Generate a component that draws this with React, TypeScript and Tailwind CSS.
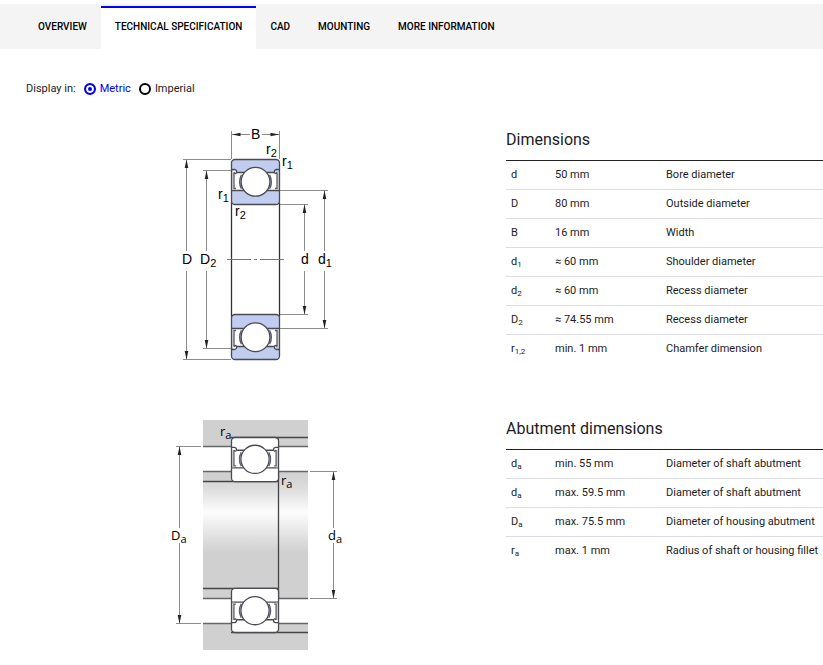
import React, { useState } from 'react';

interface Dimension {
  symbol: string;
  sub?: string;
  value: string;
  label: string;
}

const TABS = ['Overview', 'Technical specification', 'CAD', 'Mounting', 'More information'];

const UNITS = ['Metric', 'Imperial'];

const DIMENSIONS: Dimension[] = [
  { symbol: 'd', value: '50 mm', label: 'Bore diameter' },
  { symbol: 'D', value: '80 mm', label: 'Outside diameter' },
  { symbol: 'B', value: '16 mm', label: 'Width' },
  { symbol: 'd', sub: '1', value: '≈ 60 mm', label: 'Shoulder diameter' },
  { symbol: 'd', sub: '2', value: '≈ 60 mm', label: 'Recess diameter' },
  { symbol: 'D', sub: '2', value: '≈ 74.55 mm', label: 'Recess diameter' },
  { symbol: 'r', sub: '1,2', value: 'min. 1 mm', label: 'Chamfer dimension' },
];

const ABUTMENTS: Dimension[] = [
  { symbol: 'd', sub: 'a', value: 'min. 55 mm', label: 'Diameter of shaft abutment' },
  { symbol: 'd', sub: 'a', value: 'max. 59.5 mm', label: 'Diameter of shaft abutment' },
  { symbol: 'D', sub: 'a', value: 'max. 75.5 mm', label: 'Diameter of housing abutment' },
  { symbol: 'r', sub: 'a', value: 'max. 1 mm', label: 'Radius of shaft or housing fillet' },
];

// One half of the bearing cross section, 48 x 45 units
const BearingSection: React.FC<{ fill: string; transform: string }> = ({ fill, transform }) => (
  <g transform={transform} stroke="#4a4a50" strokeWidth="1.3" fill="none">
    <rect width="48" height="45" rx="3.5" fill="#fff" stroke="none" />
    <path
      d="M0 13V3.5Q0 0 3.5 0H44.5Q48 0 48 3.5V13H45Q43 10 43 13H5Q5 10 3 10Z"
      fill={fill}
      stroke="none"
    />
    <path d="M0 31H48V41.5Q48 45 44.5 45H3.5Q0 45 0 41.5Z" fill={fill} stroke="none" />
    <path d="M5 13H13M35 13H43M0 31H13M35 31H48" />
    {[undefined, 'translate(48 0) scale(-1 1)'].map((side, i) => (
      <g key={i} transform={side}>
        <path d="M0.5 13V30.5H2.5V13Z" fill="#d4d5da" stroke="none" />
        <path d="M0 10H3Q5.5 10.5 5 13Q4 15 2.5 13" />
        <path d="M2.5 13V29H4.5" stroke="#5f5f68" />
        <path d="M10.5 15.5Q7 22.3 10.5 29" stroke="#555a6c" strokeWidth="2.6" />
        <path d="M10.5 16Q7.5 22.3 10.5 28.5" stroke={fill} strokeWidth="0.8" />
      </g>
    ))}
    <circle cx="24" cy="22.3" r="14.4" fill="#fff" />
    <rect width="48" height="45" rx="3.5" />
  </g>
);

interface VerticalDimensionProps {
  x: number;
  top: number;
  bottom: number;
  gap: [number, number];
  from: number;
  to: number;
}

const VerticalDimension: React.FC<VerticalDimensionProps> = ({ x, top, bottom, gap, from, to }) => (
  <g>
    <path
      d={`M${from} ${top}H${to}M${from} ${bottom}H${to}M${x} ${top}V${gap[0]}M${x} ${gap[1]}V${bottom}`}
      stroke="#8c8c8c"
      fill="none"
    />
    <path
      d={`M${x} ${top}l1.8 8.5h-3.6zM${x} ${bottom}l1.8 -8.5h-3.6z`}
      fill="#222"
    />
  </g>
);

interface LabelProps {
  x: number;
  y: number;
  sub?: string;
  children: string;
}

const Label: React.FC<LabelProps> = ({ x, y, sub, children }) => (
  <text x={x} y={y}>
    {children}
    {sub && (
      <tspan dy="3" className="text-[11px]">
        {sub}
      </tspan>
    )}
  </text>
);

const DimensionsDrawing: React.FC = () => (
  <svg
    width="182"
    height="232"
    viewBox="0 0 182 232"
    role="img"
    aria-label="Bearing dimensions"
    className="overflow-visible font-['Liberation_Sans',sans-serif] text-[14px]"
  >
    <path d="M61.5 1V29M109.5 1V29M62 4.5H80M92 4.5H109" stroke="#8c8c8c" />
    <path d="M62 4.5l8.5 -1.8v3.6zM109 4.5l-8.5 -1.8v3.6z" fill="#222" />
    <VerticalDimension x={16.5} top={29.5} bottom={229.5} gap={[121, 141]} from={13} to={61} />
    <VerticalDimension x={36.5} top={40.5} bottom={218.5} gap={[121, 141]} from={33} to={61} />
    <VerticalDimension x={134.5} top={74.5} bottom={184.5} gap={[121, 141]} from={110} to={138} />
    <VerticalDimension x={154.5} top={60.5} bottom={198.5} gap={[121, 141]} from={110} to={158} />
    <path d="M61.5 72V187M109.5 72V187" stroke="#333" strokeWidth="1.3" />
    <path d="M57 129.5H81M84 129.5H87M90 129.5H114" stroke="#777" />
    <BearingSection fill="#c0cdee" transform="translate(61.5 29.5)" />
    <BearingSection fill="#c0cdee" transform="translate(61.5 229.5) scale(1 -1)" />
    <Label x={81} y={9}>B</Label>
    <Label x={96} y={24} sub="2">r</Label>
    <Label x={112} y={36} sub="1">r</Label>
    <Label x={48} y={69} sub="1">r</Label>
    <Label x={65} y={86} sub="2">r</Label>
    <Label x={12} y={134}>D</Label>
    <Label x={30} y={134} sub="2">D</Label>
    <Label x={131} y={134}>d</Label>
    <Label x={148} y={134} sub="1">d</Label>
  </svg>
);

const AbutmentDrawing: React.FC = () => (
  <svg
    width="182"
    height="232"
    viewBox="0 -1 182 232"
    role="img"
    aria-label="Abutment dimensions"
    className="font-['Open_Sans',sans-serif] text-[13px]"
  >
    <defs>
      <linearGradient id="shaft" gradientUnits="userSpaceOnUse" x1="0" y1="52" x2="0" y2="132">
        <stop offset="0" stopColor="#d0d0d0" />
        <stop offset="0.2" stopColor="#dcdcdc" />
        <stop offset="0.5" stopColor="#fdfdfd" />
        <stop offset="0.75" stopColor="#e6e6e6" />
        <stop offset="1" stopColor="#d0d0d0" />
      </linearGradient>
    </defs>
    <path d="M33 0H138V26.5H33ZM33 203.5H138V230H33Z" fill="#d0d0d0" />
    <path d="M33 52H138V178H33Z" fill="url(#shaft)" />
    <path d="M33 52H62V61.5H33ZM33 168.5H62V178H33Z" fill="#d0d0d0" />
    <path
      d="M33 26.5H61M108 26.5H138M33 51.5H61M108 51.5H138M33 178.5H61M108 178.5H138M33 203.5H61M108 203.5H138"
      stroke="#666"
      strokeWidth="1.3"
    />
    <path
      d="M61 17.5H138M33 61.5H109M108.5 52V178M33 168.5H109M61 212.5H138"
      stroke="#444"
      strokeWidth="1.3"
    />
    <BearingSection fill="#fff" transform="translate(61.5 17.5) scale(0.98)" />
    <BearingSection fill="#fff" transform="translate(61.5 212.5) scale(0.98 -0.98)" />
    <VerticalDimension x={9.5} top={26.5} bottom={203.5} gap={[108, 123]} from={6} to={31} />
    <VerticalDimension x={163.5} top={51.5} bottom={178.5} gap={[108, 123]} from={140} to={167} />
    <Label x={50} y={16} sub="a">r</Label>
    <Label x={111} y={65} sub="a">r</Label>
    <Label x={1} y={120} sub="a">D</Label>
    <Label x={158} y={120} sub="a">d</Label>
  </svg>
);

interface SectionProps {
  title: string;
  rows: Dimension[];
  children: React.ReactNode;
}

const Section: React.FC<SectionProps> = ({ title, rows, children }) => (
  <section className="grid grid-cols-[506fr_317fr]">
    <div className="flex justify-center pl-4">{children}</div>
    <div>
      <h2 className="h-[30px] text-base leading-5 font-normal">{title}</h2>
      <table className="w-full table-fixed border-t border-[#222] text-left text-[11px] leading-4">
        <colgroup>
          <col className="w-[49px]" />
          <col className="w-[111px]" />
          <col />
        </colgroup>
        <tbody className="divide-y divide-[#dcdce4]">
          {rows.map((row, i) => (
            <tr key={i} className="h-[29px]">
              <th scope="row" className="pl-[5px] font-normal">
                {row.symbol}
                {row.sub && <sub className="text-[8px]">{row.sub}</sub>}
              </th>
              <td>{row.value}</td>
              <td className="whitespace-nowrap">{row.label}</td>
            </tr>
          ))}
        </tbody>
      </table>
    </div>
  </section>
);

const App: React.FC = () => {
  const [tab, setTab] = useState(TABS[1]);
  const [unit, setUnit] = useState(UNITS[0]);

  return (
    <div className="bg-white pt-1 font-[Roboto,sans-serif] text-[#1c1c22]">
      <nav className="flex h-[45px] bg-[#f4f4f4] pt-0.5 pl-6">
        {TABS.map((name) => (
          <button
            key={name}
            type="button"
            onClick={() => setTab(name)}
            className={`border-t-2 px-3.5 pb-1 text-[10px] font-medium text-black uppercase ${
              name === tab ? 'border-[#0000ff] bg-white' : 'border-transparent'
            }`}
          >
            {name}
          </button>
        ))}
      </nav>

      <div className="mt-8 flex items-center pl-[26px] text-[11px] leading-4">
        <span className="mr-2">Display in:</span>
        {UNITS.map((name) => (
          <label
            key={name}
            className={`mr-2 flex items-center gap-1 ${name === unit ? 'text-[#0000ff]' : ''}`}
          >
            <input
              type="radio"
              name="unit"
              checked={name === unit}
              onChange={() => setUnit(name)}
              className="size-3 appearance-none rounded-full border-2 border-black bg-white checked:border-[#0000ff] checked:bg-[#0000ff] checked:shadow-[inset_0_0_0_2px_#fff]"
            />
            {name}
          </label>
        ))}
      </div>

      <main className="mt-[33px] grid gap-[55px]">
        <Section title="Dimensions" rows={DIMENSIONS}>
          <DimensionsDrawing />
        </Section>
        <Section title="Abutment dimensions" rows={ABUTMENTS}>
          <AbutmentDrawing />
        </Section>
      </main>
    </div>
  );
};

export default App;
